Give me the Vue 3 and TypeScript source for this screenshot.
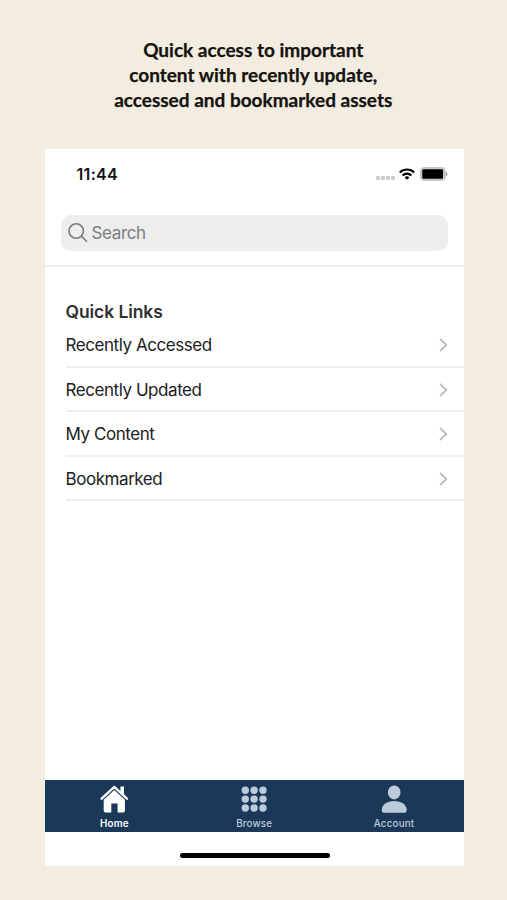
<script setup lang="ts">
interface Tab {
  name: string
  active: boolean
}

const headline: string[] = [
  'Quick access to important',
  'content with recently update,',
  'accessed and bookmarked assets',
]
const links: string[] = ['Recently Accessed', 'Recently Updated', 'My Content', 'Bookmarked']
const tabs: Tab[] = [
  { name: 'Home', active: true },
  { name: 'Browse', active: false },
  { name: 'Account', active: false },
]
const dots: number[] = [4.3, 13.1, 22]
</script>

<template>
  <main class="page">
    <h1 class="headline">
      <span v-for="(line, i) in headline" :key="i" class="line">{{ line }}</span>
    </h1>
    <section class="phone">
      <header class="status">
        <span class="time">11:44</span>
        <div class="indicators">
          <div class="signal"><i v-for="n in 4" :key="n" /></div>
          <svg class="wifi" width="16" height="12" viewBox="0 0 16 12">
            <g fill="none" stroke="#000" stroke-width="2.2">
              <path d="M.8 4.5a10.2 10.2 0 0 1 14.4 0" />
              <path d="M3.6 7.5a6.2 6.2 0 0 1 8.8 0" />
            </g>
            <path d="M5.7 9.4a3.3 3.3 0 0 1 4.6 0L8 11.8z" />
          </svg>
          <svg class="battery" width="28" height="14" viewBox="0 0 28 14">
            <rect x=".9" y=".9" width="24" height="12.2" rx="3.4" fill="#d4d4d4" stroke="#c4c4c4" stroke-width="1.8" />
            <rect x="2.3" y="2.2" width="20.8" height="9.6" rx="1.3" />
            <path d="M26.2 4.9c1.5.5 1.5 3.7 0 4.2z" fill="#888" />
          </svg>
        </div>
      </header>
      <div class="search-area">
        <div class="search">
          <svg width="20" height="20" viewBox="0 0 20 20" fill="none" stroke="#7c7c7f" stroke-width="1.6">
            <circle cx="8.2" cy="8" r="7.2" />
            <path d="m13.3 13.1 5.2 5.2" stroke-linecap="round" />
          </svg>
          <span>Search</span>
        </div>
      </div>
      <div class="content">
        <h2>Quick Links</h2>
        <ul>
          <li v-for="link in links" :key="link">
            <span>{{ link }}</span>
            <svg width="9" height="14" viewBox="0 0 9 14" fill="none" stroke="#bcbcbe" stroke-width="1.9">
              <path d="M1 .9 7.3 7 1 13.1" />
            </svg>
          </li>
        </ul>
      </div>
      <nav class="tabs">
        <div v-for="tab in tabs" :key="tab.name" class="tab" :class="{ active: tab.active }">
          <svg v-if="tab.name === 'Home'" width="30" height="28" viewBox="0 0 30 28">
            <path d="M2.6 13.7 15.3 1.9 28 13.7" fill="none" stroke="currentColor" stroke-width="2.3" stroke-linecap="round" stroke-linejoin="round" />
            <path d="M21.4 1.5h3.6v8l-3.6-3.2z" fill="currentColor" />
            <path d="M4.7 14.8 15.3 5.1l10.6 9.7v11q0 1.8-1.8 1.8h-5.5v-9h-6.300v9H6.500q-1.800 0-1.800-1.800z" fill="currentColor" />
          </svg>
          <svg v-else-if="tab.name === 'Browse'" width="26" height="28" viewBox="0 0 26 28" fill="currentColor">
            <template v-for="y in dots" :key="y">
              <circle v-for="x in dots" :key="x" :cx="x" :cy="y + 1" r="3.7" />
            </template>
          </svg>
          <svg v-else width="26" height="28" viewBox="0 0 26 28" fill="currentColor">
            <ellipse cx="13.2" cy="7.4" rx="6.3" ry="7" />
            <path d="M.7 25.5C.7 19.5 6 16 13.2 16S25.7 19.5 25.7 25.5q0 2.2-2.2 2.2H2.9Q.7 27.7.7 25.5z" />
          </svg>
          <span>{{ tab.name }}</span>
        </div>
      </nav>
      <footer class="home-indicator"><i /></footer>
    </section>
  </main>
</template>

<style>
body {
  background: #f3ece0;
}
</style>

<style scoped>
.page {
  box-sizing: border-box;
  height: 900px;
  padding: 37px 43px 34px 44.5px;
  background: #f3ece0;
  font-family: Inter, "Liberation Sans", sans-serif;
  display: flex;
  flex-direction: column;
  overflow: hidden;
}
.headline {
  margin: 0 0 37px;
  height: 75px;
  font: 700 19px/25px Lato, Carlito, sans-serif;
  color: #15130f;
  -webkit-text-stroke: 0.25px #15130f;
  text-align: center;
  white-space: nowrap;
}
.line {
  display: block;
  margin-right: 2px;
}
.phone {
  flex: 1;
  background: #fff;
  display: flex;
  flex-direction: column;
}
.status {
  height: 50px;
  display: flex;
  justify-content: space-between;
  padding: 0 16.5px 0 32px;
  align-items: center;
}
.time {
  font-size: 16px;
  font-weight: 600;
  letter-spacing: 0.3px;
  color: #111;
}
.indicators {
  display: flex;
  align-items: center;
}
.signal {
  display: flex;
  gap: 1px;
  margin: 7px 4.5px 0 0;
}
.signal i {
  width: 4px;
  height: 4px;
  border-radius: 1px;
  background: #cbcbcb;
}
.wifi {
  margin-right: 4.5px;
}
.search-area {
  box-sizing: border-box;
  height: 68px;
  padding: 16px 16px 0 16.5px;
  border-bottom: 2px solid #efefef;
}
.search {
  height: 36px;
  border-radius: 10px;
  background: #ededed;
  display: flex;
  align-items: center;
  gap: 4px;
  padding-left: 6.5px;
  color: #7c7c7f;
  font-size: 17px;
  letter-spacing: -0.35px;
}
.content {
  flex: 1;
  padding: 32px 0 0 21px;
}
h2 {
  margin: 0;
  font-size: 17.5px;
  line-height: 26px;
  font-weight: 600;
  letter-spacing: -0.08px;
  color: #303033;
}
ul {
  margin: -2px 0 0;
  padding: 0;
  list-style: none;
}
li {
  box-sizing: border-box;
  height: 44.6px;
  display: flex;
  align-items: center;
  justify-content: space-between;
  padding: 2px 16px 0 0;
  border-bottom: 2px solid #eee;
  color: #202022;
  font-size: 17px;
  letter-spacing: -0.44px;
}
.tabs {
  height: 51.5px;
  display: flex;
  background: #1b3859;
}
.tab {
  flex: 1;
  display: flex;
  flex-direction: column;
  align-items: center;
  padding-top: 5px;
  color: #bccbdb;
}
.tab span {
  font-size: 9.8px;
  line-height: 14px;
  margin-top: 3.5px;
  font-weight: 500;
  letter-spacing: 0.2px;
}
.tab.active {
  color: #fff;
}
.tab.active span {
  font-weight: 600;
}
.home-indicator {
  height: 34.5px;
  display: flex;
  justify-content: center;
}
.home-indicator i {
  width: 150px;
  height: 5px;
  margin: 21px 0 0 1px;
  border-radius: 3px;
  background: #000;
}
</style>
